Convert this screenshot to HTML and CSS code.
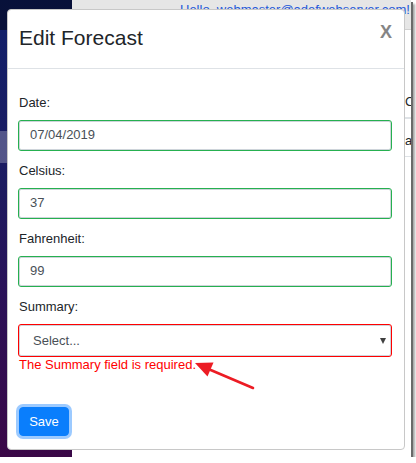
FILE: index.html
```html
<!DOCTYPE html>
<html>
<head>
<meta charset="utf-8">
<link rel="stylesheet" href="styles.css">
</head>
<body>
<div class="screen">
  <aside class="sidebar">
    <div class="sidebar-top"></div>
    <nav class="nav">
      <div class="nav-item active"></div>
    </nav>
  </aside>
  <main class="main">
    <div class="top-row"><a class="user-link">Hello, webmaster@adefwebserver.com!</a></div>
    <div class="table">
      <div class="table-head">Celsius</div>
      <div class="table-row">about</div>
    </div>
  </main>

  <div class="modal">
    <div class="modal-header">
      <h3 class="modal-title">Edit Forecast</h3>
      <span class="modal-close">X</span>
    </div>
    <form class="modal-body">
      <div class="form-group">
        <label class="form-label">Date:</label>
        <input class="form-control valid" type="text" value="07/04/2019">
      </div>
      <div class="form-group">
        <label class="form-label">Celsius:</label>
        <input class="form-control valid" type="text" value="37">
      </div>
      <div class="form-group">
        <label class="form-label">Fahrenheit:</label>
        <input class="form-control valid" type="text" value="99">
      </div>
      <div class="form-group last">
        <label class="form-label">Summary:</label>
        <div class="select-wrap">
          <select class="form-select invalid">
            <option>Select...</option>
          </select>
          <span class="caret"></span>
        </div>
        <div class="validation-message">The Summary field is required.</div>
      </div>
      <button class="btn-save" type="button">Save</button>
    </form>
  </div>

  <svg class="annotation" width="411" height="457" viewBox="0 0 411 457">
    <line x1="253" y1="388" x2="206" y2="368" stroke="#ec1c24" stroke-width="2.6" stroke-linecap="round"/>
    <polygon points="195,363 213.5,362.5 207.5,376.5" fill="#ec1c24"/>
  </svg>
</div>
</body>
</html>
```

FILE: styles.css
```css
html, body {
  margin: 0;
  padding: 0;
  background: #ffffff;
}

.screen {
  position: relative;
  display: flex;
  width: 411px;
  height: 457px;
  overflow: hidden;
  font-family: "Liberation Sans", Arial, sans-serif;
  box-shadow: 2px 2px 0 #6a6a6a, 4px 4px 2px rgba(0, 0, 0, 0.35);
  background: #ffffff;
}

.sidebar {
  width: 72px;
  flex: none;
  display: flex;
  flex-direction: column;
  background: linear-gradient(180deg, #10206a 0%, #1c1b60 40%, #2a1157 65%, #3a0847 100%);
}

.sidebar-top {
  height: 30px;
  background: rgba(0, 0, 0, 0.45);
}

.nav {
  padding-top: 101px;
}

.nav-item {
  height: 32px;
}

.nav-item.active {
  background: rgba(255, 255, 255, 0.25);
}

.main {
  flex: 1;
  display: flex;
  flex-direction: column;
  background: #ffffff;
  border-right: 1px solid #b5b5b5;
}

.top-row {
  height: 30px;
  box-sizing: border-box;
  background: #e6e6e6;
  border-bottom: 1px solid #d0d0d0;
  padding-left: 108px;
  white-space: nowrap;
}

.user-link {
  font-size: 13px;
  line-height: 16px;
  color: #2458d8;
}

.table {
  margin-left: 333px;
  margin-top: 56px;
  font-size: 13px;
  color: #212529;
  white-space: nowrap;
}

.table-head {
  height: 33px;
  box-sizing: border-box;
  padding-top: 8px;
  border-bottom: 2px solid #dee2e6;
}

.table-row {
  height: 38px;
  box-sizing: border-box;
  padding-top: 14px;
  border-bottom: 1px solid #dee2e6;
}

/* Modal dialog overlay */
.modal {
  position: absolute;
  left: 7px;
  top: 9px;
  width: 398px;
  height: 441px;
  box-sizing: border-box;
  background: #ffffff;
  border: 1px solid #c8c8c8;
  border-radius: 4px;
  display: flex;
  flex-direction: column;
}

.modal-header {
  height: 59px;
  box-sizing: border-box;
  display: flex;
  justify-content: space-between;
  align-items: flex-start;
  padding: 15px 12px 0 11px;
  border-bottom: 1px solid #dee2e6;
}

.modal-title {
  margin: 0;
  font-size: 21px;
  line-height: 25px;
  font-weight: normal;
  color: #212529;
}

.modal-close {
  font-size: 18px;
  line-height: 20px;
  font-weight: bold;
  color: #858585;
  margin-top: -3px;
}

.modal-body {
  margin: 0;
  padding: 24px 13px 0 11px;
  display: flex;
  flex-direction: column;
  align-items: flex-start;
}

.form-group {
  align-self: stretch;
  margin-bottom: 11px;
}

.form-group.last {
  margin-bottom: 0;
}

.form-label {
  display: block;
  font-size: 13px;
  line-height: 20px;
  color: #212529;
  margin-bottom: 8px;
}

.form-control {
  display: block;
  width: 100%;
  height: 29px;
  box-sizing: border-box;
  margin: 0;
  padding: 2px 10px 5px;
  font-family: "Liberation Sans", Arial, sans-serif;
  font-size: 13px;
  line-height: 20px;
  color: #495057;
  background: #ffffff;
  border: 1px solid #ced4da;
  border-radius: 2px;
}

.valid {
  outline: 1px solid #26b050;
}

.invalid {
  outline: 1px solid #ff0000;
}

.select-wrap {
  position: relative;
}

.form-select {
  display: block;
  width: 100%;
  height: 31px;
  box-sizing: border-box;
  margin: 0;
  padding: 0 24px 0 13px;
  font-family: "Liberation Sans", Arial, sans-serif;
  font-size: 13px;
  line-height: 29px;
  color: #495057;
  background: #ffffff;
  border: 1px solid #ced4da;
  border-radius: 2px;
  appearance: none;
  -webkit-appearance: none;
}

.caret {
  position: absolute;
  right: 5px;
  top: 13px;
  width: 0;
  height: 0;
  border-left: 3.5px solid transparent;
  border-right: 3.5px solid transparent;
  border-top: 6px solid #404040;
}

.validation-message {
  margin-top: 1px;
  font-size: 13px;
  line-height: 16px;
  color: #ff0000;
}

.btn-save {
  margin-top: 34px;
  width: 50px;
  height: 29px;
  padding: 0;
  font-family: "Liberation Sans", Arial, sans-serif;
  font-size: 13px;
  color: #ffffff;
  background: #0a7efc;
  border: 1px solid #0a7efc;
  border-radius: 4px;
  box-shadow: 0 0 0 3px rgba(58, 150, 255, 0.5);
}

.annotation {
  position: absolute;
  left: 0;
  top: 0;
  pointer-events: none;
}
```
